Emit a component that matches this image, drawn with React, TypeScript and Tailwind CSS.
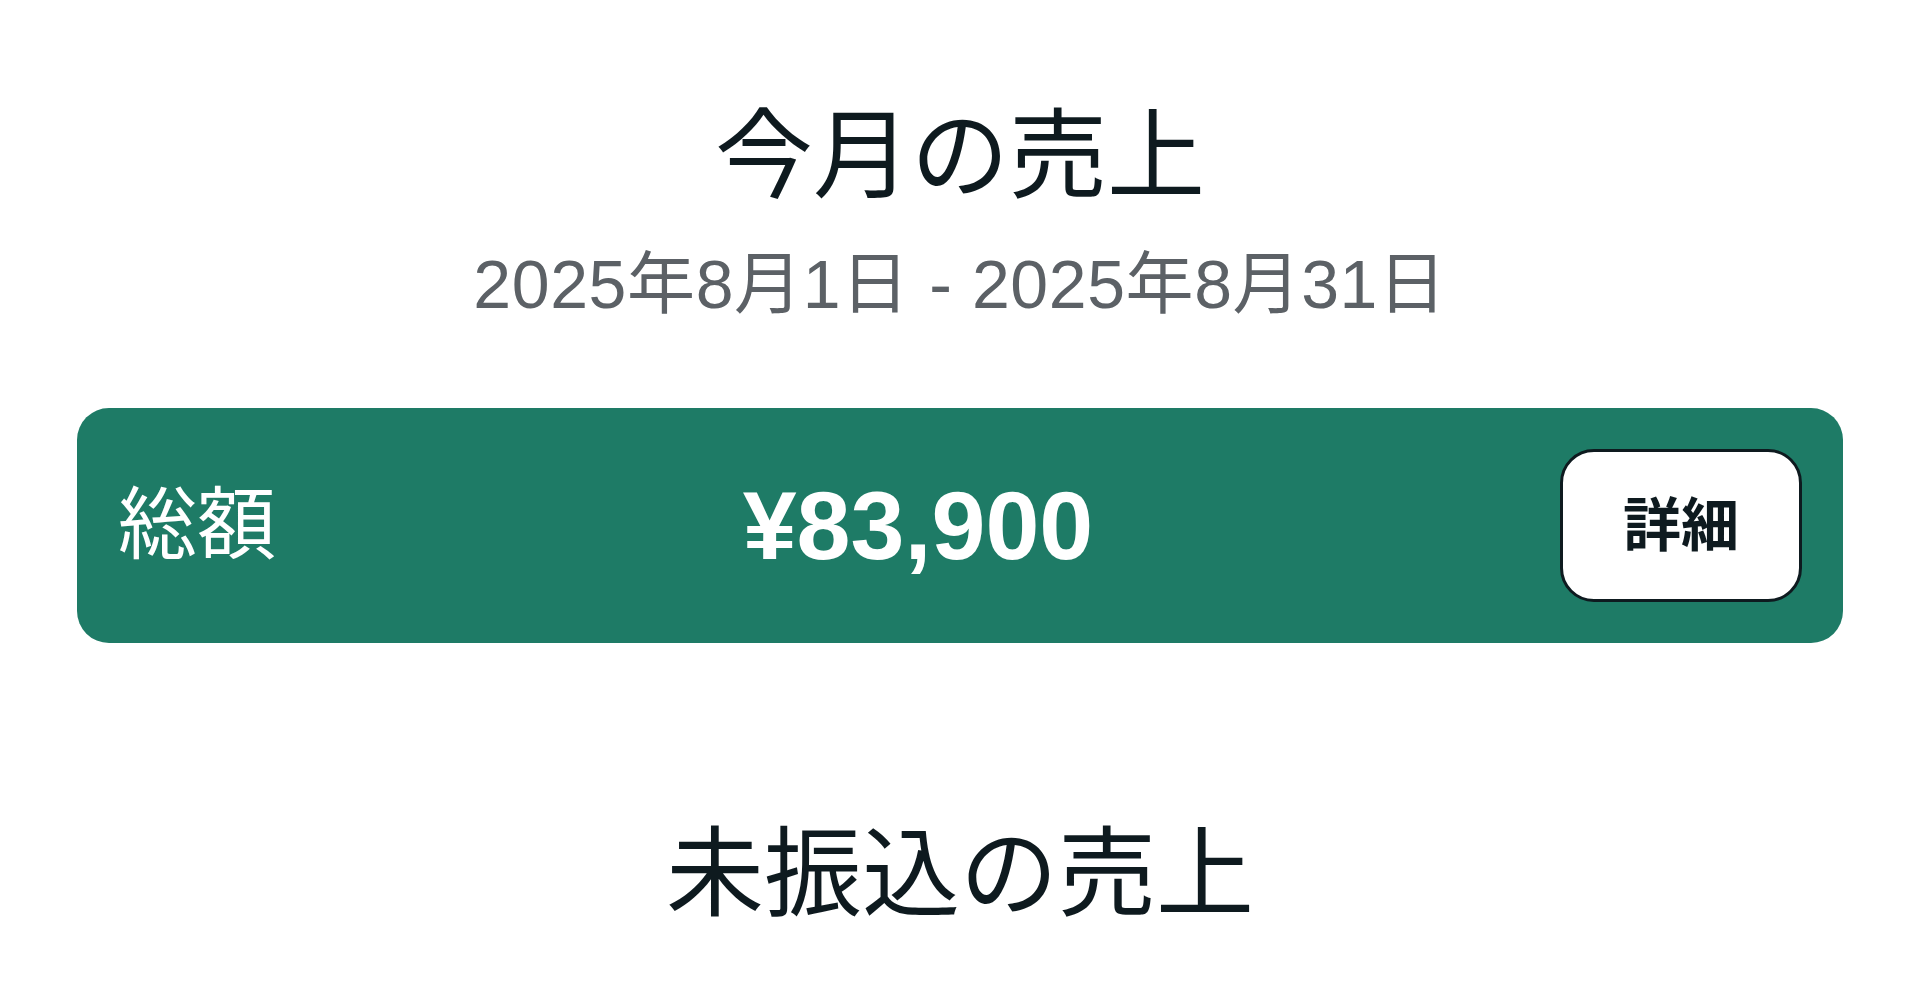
const font = { fontFamily: '"Liberation Sans", "Noto Sans CJK JP", sans-serif' };

function TotalCard() {
  return (
    <div className="flex items-center justify-between rounded-[32px] bg-[#1e7b66] px-[41px] py-[41px]">
      <span className="text-[79px] leading-none text-white">総額</span>
      <span className="text-[97px] font-bold leading-none text-white">¥83,900</span>
      <button className="flex h-[153px] w-[242px] items-center justify-center rounded-[34px] border-[3.5px] border-[#0e1a1f] bg-white text-[58px] font-bold text-[#0e1a1f]">
        詳細
      </button>
    </div>
  );
}

export default function App() {
  return (
    <div className="min-h-screen bg-white" style={font}>
      <div className="flex flex-col px-[77px] pt-[100px] text-center">
        <h1 className="text-[98px] font-normal leading-[112px] text-[#0e1a1f]">今月の売上</h1>
        <p className="mt-[32px] text-[68px] leading-[80px] tracking-[0.6px] text-[#5c6166]">2025年8月1日 - 2025年8月31日</p>

        <div className="mt-[84px]">
          <TotalCard />
        </div>

        <h2 className="mt-[175px] text-[98px] font-normal leading-[112px] text-[#0e1a1f]">未振込の売上</h2>
      </div>
    </div>
  );
}
